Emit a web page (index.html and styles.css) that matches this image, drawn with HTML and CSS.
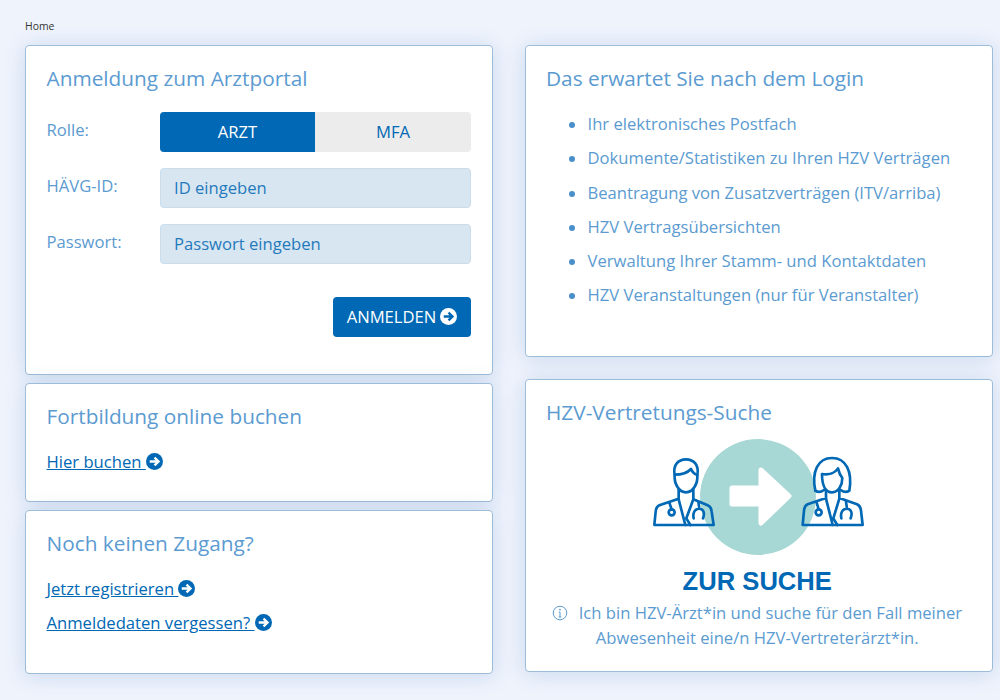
FILE: index.html
```html
<!DOCTYPE html>
<html lang="de">
    <head>
        <title>Home</title>
        <link rel="stylesheet" href="styles.css">
    </head>

    <body>
        <div class="crumb">Home</div>

        <div class="wrap">
            <div class="col col-left">
                <div class="card card-login">
                    <h2>Anmeldung zum Arztportal</h2>
                    <div class="row">
                        <label>Rolle:</label>
                        <div class="toggle">
                            <span class="on">ARZT</span>
                            <span>MFA</span>
                        </div>
                    </div>
                    <div class="row">
                        <label for="hid">HÄVG-ID:</label>
                        <input id="hid" type="text" placeholder="ID eingeben">
                    </div>
                    <div class="row">
                        <label for="pw">Passwort:</label>
                        <input id="pw" type="text" placeholder="Passwort eingeben">
                    </div>
                    <div class="actions">
                        <button>ANMELDEN
                            <svg class="go go-white" viewBox="0 0 16 16"><circle cx="8" cy="8" r="8"/><path d="M3.5 8H11.5M8 4.3L11.8 8L8 11.7"/></svg>
                        </button>
                    </div>
                </div><!--card-login-->

                <div class="card card-book">
                    <h2>Fortbildung online buchen</h2>
                    <p class="link"><a href="#">Hier buchen </a><svg class="go" viewBox="0 0 16 16"><circle cx="8" cy="8" r="8"/><path d="M3.5 8H11.5M8 4.3L11.8 8L8 11.7"/></svg></p>
                </div>

                <div class="card card-access">
                    <h2>Noch keinen Zugang?</h2>
                    <p class="link"><a href="#">Jetzt registrieren </a><svg class="go" viewBox="0 0 16 16"><circle cx="8" cy="8" r="8"/><path d="M3.5 8H11.5M8 4.3L11.8 8L8 11.7"/></svg></p>
                    <p class="link"><a href="#">Anmeldedaten vergessen? </a><svg class="go" viewBox="0 0 16 16"><circle cx="8" cy="8" r="8"/><path d="M3.5 8H11.5M8 4.3L11.8 8L8 11.7"/></svg></p>
                </div>
            </div>

            <div class="col col-right">
                <div class="card card-info">
                    <h2>Das erwartet Sie nach dem Login</h2>
                    <ul>
                        <li>Ihr elektronisches Postfach</li>
                        <li>Dokumente/Statistiken zu Ihren HZV Verträgen</li>
                        <li>Beantragung von Zusatzverträgen (ITV/arriba)</li>
                        <li>HZV Vertragsübersichten</li>
                        <li>Verwaltung Ihrer Stamm- und Kontaktdaten</li>
                        <li>HZV Veranstaltungen (nur für Veranstalter)</li>
                    </ul>
                </div>

                <div class="card card-search">
                    <h2>HZV-Vertretungs-Suche</h2>
                    <svg class="doctors" viewBox="-2 0 216 124">
                        <circle class="disc" cx="107" cy="62" r="58"/>
                        <path class="arrow" d="M81 53H110V35L138 61L110 88V69H81Z"/>
                        <!-- Arzt -->
                        <g class="doc" transform="translate(-10 15) scale(.3333)">
                            <path d="M101 75C95 45 112 28 135 28C158 28 175 45 169 75C171 100 157 127 135 127C113 127 99 100 101 75Z"/>
                            <path d="M101 74C122 74 140 68 150 57C154 67 162 73 169 75"/>
                            <path d="M113 118V146L55 166C48 169 45 175 44 185L40 225H218L212 185C211 175 208 169 200 166L157 148V118"/>
                            <path d="M113 148L133 225M157 148L136 205L148 225"/>
                            <path d="M85 158L92 178"/>
                            <circle cx="92" cy="187" r="9"/>
                            <path d="M158 205C154 186 164 176 174 176C188 176 192 190 186 205M172 155L175 176"/>
                        </g>
                        <!-- Aerztin -->
                        <g class="doc" transform="translate(145 15) scale(.3333)">
                            <path d="M58 122C46 65 66 24 108 24C150 24 170 65 160 122C152 128 142 126 134 120"/>
                            <path d="M58 122C66 128 76 126 84 120"/>
                            <path d="M78 72C100 76 118 68 126 55C129 68 134 78 139 84C139 105 128 127 108 127C88 127 78 105 78 72Z"/>
                            <path d="M90 122V144L35 163C28 166 25 172 24 182L20 225H200L195 182C194 172 190 166 183 163L130 144V122"/>
                            <path d="M90 146L110 225M130 146L112 205L124 225"/>
                            <path d="M62 158L68 178"/>
                            <circle cx="68" cy="187" r="9"/>
                            <path d="M136 205C132 186 142 176 152 176C166 176 170 190 164 205M150 155L153 176"/>
                        </g>
                    </svg>
                    <div class="search-title">ZUR SUCHE</div>
                    <p class="search-text">
                        <svg class="info" viewBox="0 0 16 16"><circle cx="8" cy="8" r="6.8"/><path d="M8 7V12M6.6 12H9.4M6.8 7H8"/><circle class="dot" cx="8" cy="4.6" r=".9"/></svg>
                        Ich bin HZV-Ärzt*in und suche für den Fall meiner<br>Abwesenheit eine/n HZV-Vertreterärzt*in.
                    </p>
                </div>
            </div>
        </div><!--wrap-->
    </body>
</html>
```

FILE: styles.css
```css
*{margin:0;padding:0;box-sizing:border-box;}

body{
    background-color: #eff3fc;
    font-family: 'Open Sans', 'Liberation Sans', sans-serif;
    color: #5b9bd1;
    font-size: 16.64px;
    height: 700px;
    overflow: hidden;
}

.crumb{
    font-size: 10.4px;
    line-height: 14px;
    color: #333;
    padding: 19px 0 0 25px;
    height: 45px;
}

.wrap{
    display: flex;
    gap: 31.5px;
    padding-left: 25px;
}

.col{
    width: 468px;
    display: flex;
    flex-direction: column;
}

.col-left{gap: 8px;}
.col-right{gap: 22px;}

.card{
    background-color: #fff;
    border: 1px solid #9dbcd8;
    border-radius: 4px;
    box-shadow: 0 2px 22px rgba(0, 84, 170, 0.16);
    padding: 19px 21px 0 20.5px;
}

.card-login{height: 330px;}
.card-book{height: 119px;}
.card-access{height: 164px;}
.card-info{height: 312px;}
.card-search{height: 293px; padding-right: 23px;}

h2{
    font-size: 20.8px;
    font-weight: 400;
    line-height: 26px;
    margin-bottom: 21px;
}

.row{
    display: flex;
    margin-bottom: 16px;
}

.row label{
    width: 113.5px;
    line-height: 36px;
}

.toggle{
    width: 311px;
    height: 40px;
    display: flex;
    background-color: #ececec;
    border-radius: 4px;
    overflow: hidden;
}

.toggle span{
    flex: 1;
    text-align: center;
    line-height: 40px;
    color: #0068b4;
}

.toggle .on{
    flex: 0 0 155px;
    background-color: #0068b4;
    color: #fff;
}

input[type=text]{
    width: 311px;
    height: 40px;
    border: 1px solid #cbdcea;
    border-radius: 4px;
    background-color: #d8e6f1;
    padding: 0 13px 2px;
    font-family: inherit;
    font-size: 16.64px;
}

input::placeholder{
    color: #0068b4;
    opacity: .85;
}

.actions{
    display: flex;
    justify-content: flex-end;
    width: 424.5px;
    margin-top: 33px;
}

button{
    width: 138px;
    height: 40px;
    border: 0;
    border-radius: 4px;
    padding-bottom: 2px;
    background-color: #0068b4;
    color: #fff;
    font-family: inherit;
    font-size: 16.64px;
    display: flex;
    align-items: center;
    justify-content: center;
    gap: 4px;
}

.go{
    width: 17px;
    height: 17px;
    vertical-align: -2px;
    fill: #0068b4;
    stroke: #fff;
}

.go path{
    fill: none;
    stroke-width: 2.2;
}

.go circle{stroke: none;}

.go-white{
    fill: #fff;
    stroke: #0068b4;
}

.link{
    line-height: 24px;
    margin-bottom: 10px;
}

.link a{
    color: #0068b4;
}

ul{
    list-style: none;
    padding-left: 41.5px;
    position: relative;
}

li{
    line-height: 24px;
    margin-bottom: 10.3px;
    position: relative;
}

li::before{
    content: "";
    position: absolute;
    left: -18.5px;
    top: 10px;
    width: 6px;
    height: 6px;
    border-radius: 50%;
    background-color: #4a8fca;
}

.doctors{
    display: block;
    width: 216px;
    height: 124px;
    margin: -11px auto 0;
}

.disc{fill: #a8d8d5;}

.arrow{
    fill: #fff;
    stroke: #fff;
    stroke-width: 5;
    stroke-linejoin: round;
}

.doc{
    fill: none;
    stroke: #0068b4;
    stroke-width: 8;
    stroke-linejoin: round;
    stroke-linecap: round;
}

.search-title{
    font-family: 'Liberation Sans', Arial, sans-serif;
    font-weight: 700;
    font-size: 25.6px;
    line-height: 30px;
    color: #0068b4;
    text-align: center;
    margin-top: 7px;
}

.search-text{
    text-align: center;
    line-height: 24.5px;
    margin-top: 5px;
}

.info{
    width: 16px;
    height: 16px;
    vertical-align: -2px;
    margin-right: 6px;
    fill: none;
    stroke: #5b9bd1;
    stroke-width: 1;
}

.info .dot{
    fill: #5b9bd1;
    stroke: none;
}
```
